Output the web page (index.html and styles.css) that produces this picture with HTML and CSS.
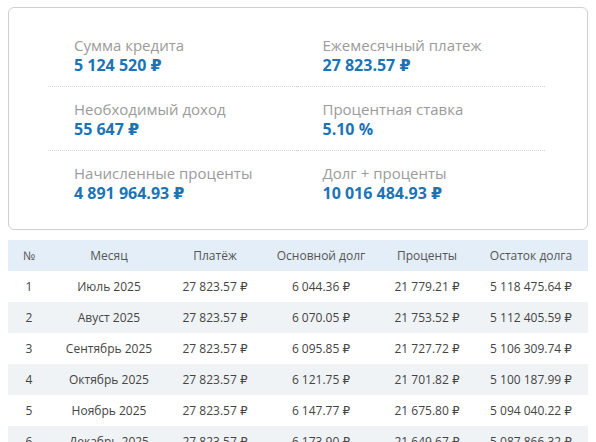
FILE: index.html
```html
<!DOCTYPE html>
<html lang="ru">
<head>
<meta charset="utf-8">
<link rel="stylesheet" href="styles.css">
</head>
<body>
<div class="summary">
  <div class="grid">
    <div class="item"><div class="label">Сумма кредита</div><div class="value">5 124 520 ₽</div></div>
    <div class="item"><div class="label">Ежемесячный платеж</div><div class="value">27 823.57 ₽</div></div>
    <div class="item"><div class="label">Необходимый доход</div><div class="value">55 647 ₽</div></div>
    <div class="item"><div class="label">Процентная ставка</div><div class="value">5.10 %</div></div>
    <div class="item last"><div class="label">Начисленные проценты</div><div class="value">4 891 964.93 ₽</div></div>
    <div class="item last"><div class="label">Долг + проценты</div><div class="value">10 016 484.93 ₽</div></div>
  </div>
</div>
<table class="schedule">
  <colgroup>
    <col class="c1"><col class="c2"><col class="c3"><col class="c4"><col class="c5"><col class="c6">
  </colgroup>
  <thead>
    <tr><th>№</th><th>Месяц</th><th>Платёж</th><th>Основной долг</th><th>Проценты</th><th>Остаток долга</th></tr>
  </thead>
  <tbody>
    <tr><td>1</td><td>Июль 2025</td><td>27 823.57 ₽</td><td>6 044.36 ₽</td><td>21 779.21 ₽</td><td>5 118 475.64 ₽</td></tr>
    <tr><td>2</td><td>Авуст 2025</td><td>27 823.57 ₽</td><td>6 070.05 ₽</td><td>21 753.52 ₽</td><td>5 112 405.59 ₽</td></tr>
    <tr><td>3</td><td>Сентябрь 2025</td><td>27 823.57 ₽</td><td>6 095.85 ₽</td><td>21 727.72 ₽</td><td>5 106 309.74 ₽</td></tr>
    <tr><td>4</td><td>Октябрь 2025</td><td>27 823.57 ₽</td><td>6 121.75 ₽</td><td>21 701.82 ₽</td><td>5 100 187.99 ₽</td></tr>
    <tr><td>5</td><td>Ноябрь 2025</td><td>27 823.57 ₽</td><td>6 147.77 ₽</td><td>21 675.80 ₽</td><td>5 094 040.22 ₽</td></tr>
    <tr><td>6</td><td>Декабрь 2025</td><td>27 823.57 ₽</td><td>6 173.90 ₽</td><td>21 649.67 ₽</td><td>5 087 866.32 ₽</td></tr>
  </tbody>
</table>
</body>
</html>
```

FILE: styles.css
```css
html, body {
  margin: 0;
  background: #fff;
}
body {
  padding: 7px 8px 0 8px;
  font-family: "Open Sans", "DejaVu Sans", sans-serif;
}
.summary {
  border: 1px solid #cfcfcf;
  border-radius: 6px;
  padding: 15px 42px 15px 39px;
}
.grid {
  display: grid;
  grid-template-columns: 1fr 1fr;
}
.item {
  padding: 13px 0 11px 26px;
  border-bottom: 1px dotted #d4d4d4;
}
.item.last {
  border-bottom: none;
}
.label {
  font-size: 15px;
  line-height: 19px;
  color: #9b9b9b;
}
.value {
  font-size: 16px;
  line-height: 20px;
  font-weight: 700;
  color: #1b74b6;
}
.schedule {
  margin-top: 10px;
  width: 580px;
  border-collapse: collapse;
  table-layout: fixed;
  font-size: 12px;
  color: #444;
}
.c1 { width: 42px; }
.c2 { width: 118px; }
.c3 { width: 94px; }
.c4 { width: 118px; }
.c5 { width: 94px; }
.c6 { width: 114px; }
.schedule th, .schedule td {
  height: 31px;
  padding: 0;
  text-align: center;
  font-weight: 400;
  white-space: nowrap;
}
.schedule thead th {
  background: #e4eef8;
  color: #555;
}
.schedule tbody tr:nth-child(even) td {
  background: #f0f3f6;
}
```
